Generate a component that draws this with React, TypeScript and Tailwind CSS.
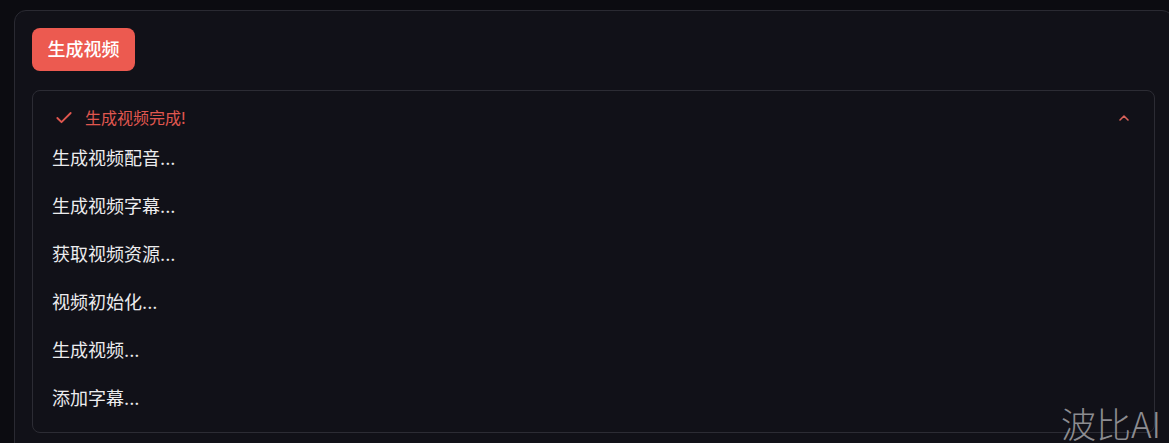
import React from "react";
import { Check, ChevronUp } from "lucide-react";

const steps = [
  "生成视频配音...",
  "生成视频字幕...",
  "获取视频资源...",
  "视频初始化...",
  "生成视频...",
  "添加字幕...",
];

export default function App() {
  return (
    <div
      className="relative h-[443px] w-[1169px] overflow-hidden bg-[#0c0c11] pl-[14px] pt-[10px]"
      style={{ fontFamily: '"Inter", "Noto Sans CJK SC", sans-serif' }}
    >
      <div className="w-[1160px] rounded-xl border border-[#2a2a32] bg-[#111118] px-[17px] pt-[17px] pb-6">
        <button
          type="button"
          className="h-[43px] w-[103px] rounded-lg bg-[#ec5a50] text-[18px] font-medium text-white"
        >
          生成视频
        </button>

        <div className="mt-[19px] w-[1123px] rounded-lg border border-[#2c2c34] px-[19px] pb-[10px]">
          <div className="flex h-[37px] items-end pr-[3px]">
            <div className="flex h-[20px] w-full items-center">
              <Check className="ml-[2px] h-[20px] w-[20px] text-[#e0574f]" strokeWidth={2.2} />
              <span className="ml-[11px] text-[16px] leading-5 text-[#e0574f]">
                生成视频完成!
              </span>
              <ChevronUp className="ml-auto h-[16px] w-[16px] text-[#d9625a]" strokeWidth={2.4} />
            </div>
          </div>
          <ul className="mt-[6px]">
            {steps.map((s) => (
              <li
                key={s}
                className="flex h-[48px] items-center text-[18px] text-[#ececee]"
              >
                {s}
              </li>
            ))}
          </ul>
        </div>
      </div>

      <div
        className="absolute right-[8px] bottom-0 text-[35px] leading-[40px] font-light text-[#8c8c90]"
        style={{ fontFamily: '"Noto Sans CJK SC", sans-serif' }}
      >
        波比AI
      </div>
    </div>
  );
}
